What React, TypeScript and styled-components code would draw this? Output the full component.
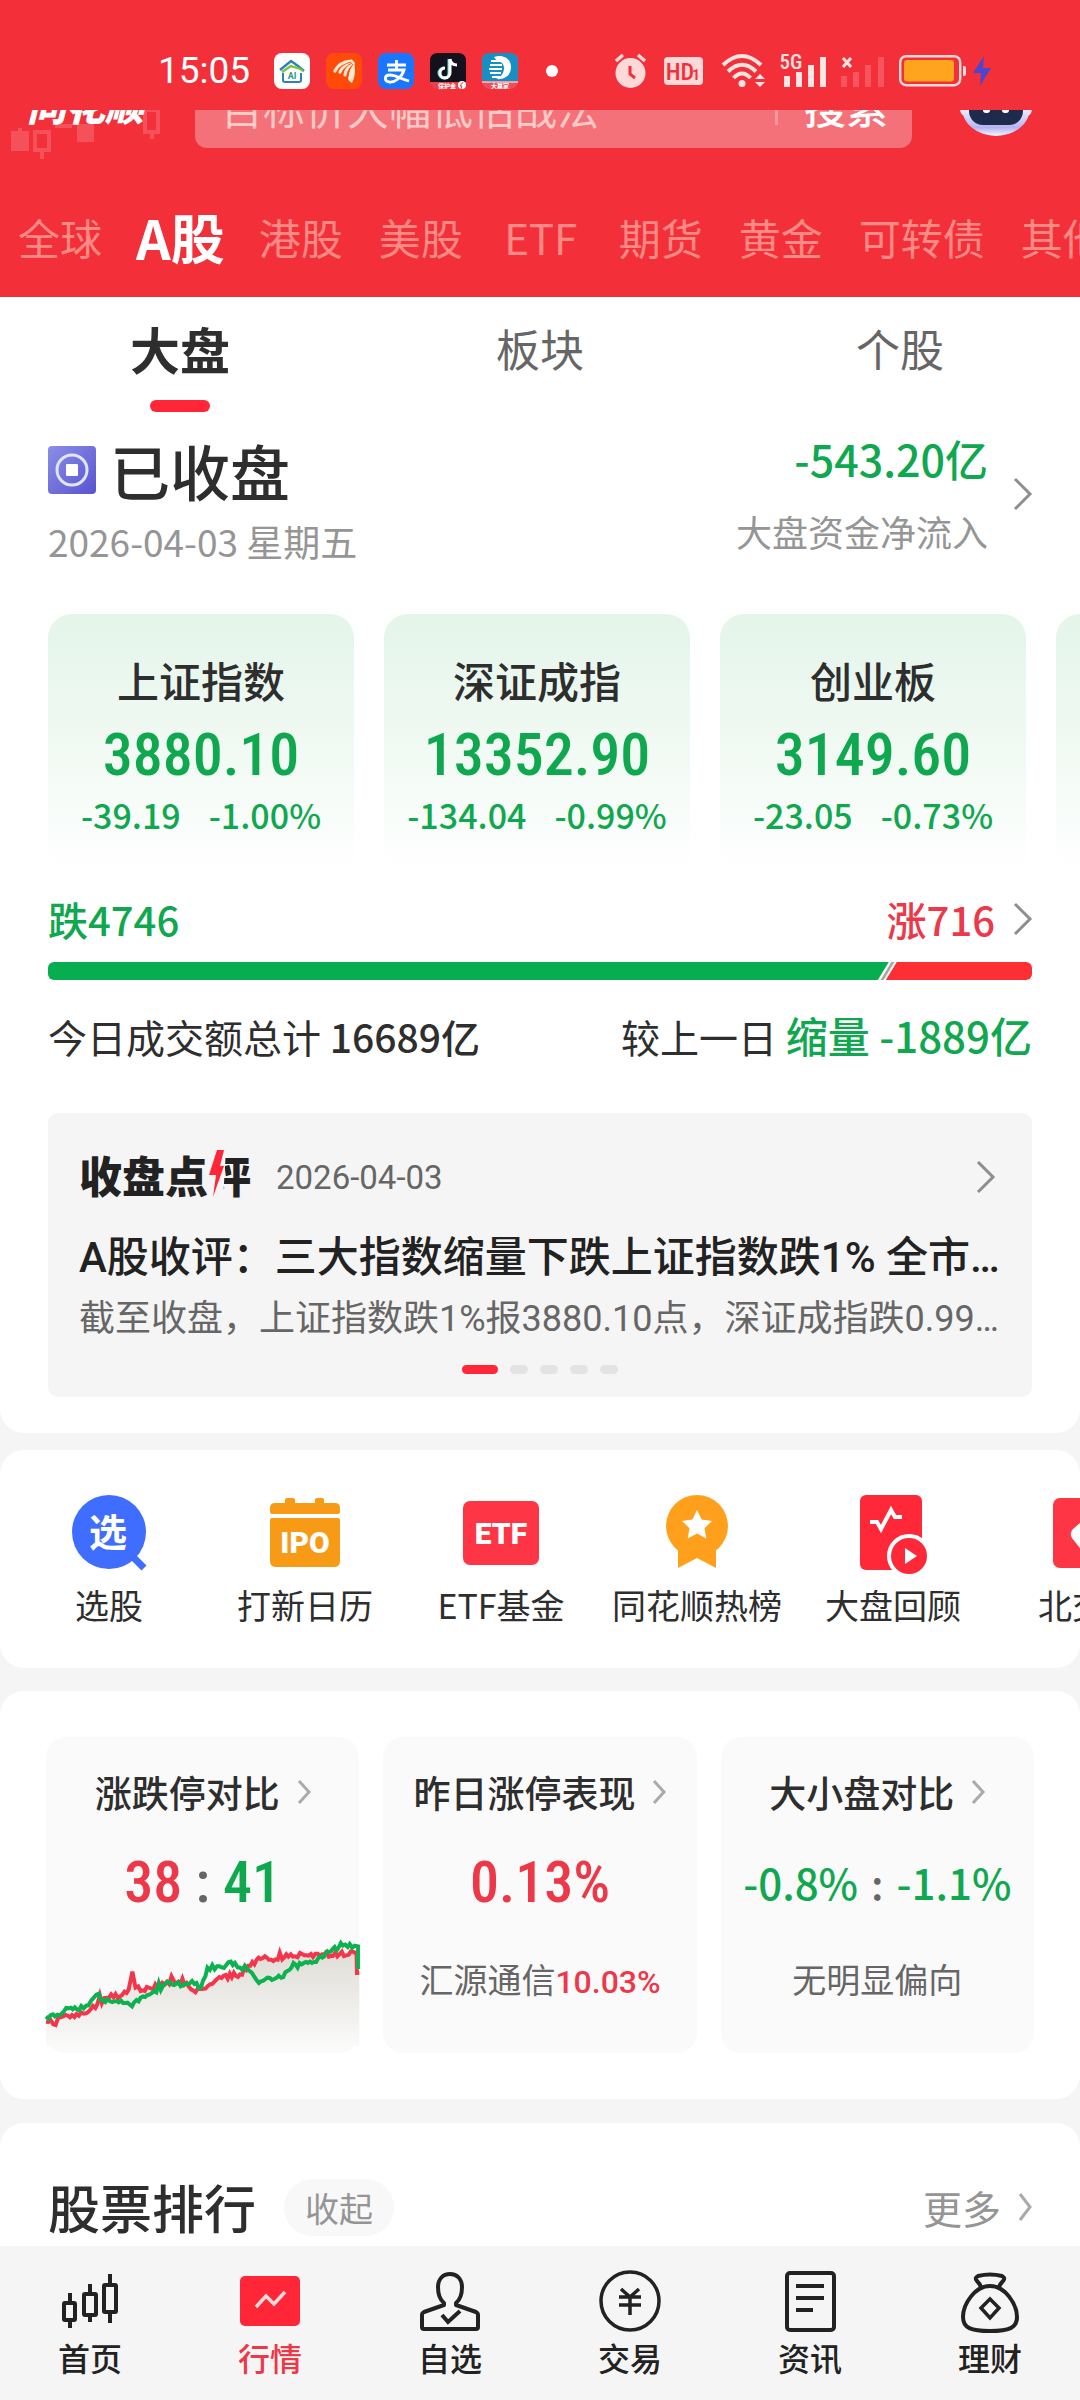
import React from "react";
import styled, { createGlobalStyle } from "styled-components";

const CJK = `"Noto Sans CJK SC", sans-serif`;
const MIXED = `Roboto, "Noto Sans CJK SC", sans-serif`;
const DIGITS = `"Roboto Condensed", "Noto Sans CJK SC", sans-serif`;

const c = {
  brand: "#f3303a",
  red: "#ff2637",
  redText: "#ec3849",
  green: "#0fa84f",
  ink: "#2e2e2e",
  mid: "#666666",
  soft: "#959595",
  page: "#f5f5f5",
};

const Global = createGlobalStyle`
  * { box-sizing: border-box; }
  body { margin: 0; background: ${c.page}; color: ${c.ink}; font-family: ${CJK}; }
  button, input { font: inherit; color: inherit; }
  button { border: 0; padding: 0; background: none; cursor: pointer; }
  a { color: inherit; text-decoration: none; }
  svg { display: block; flex: none; overflow: visible; }
  h1, h2, h3, p { margin: 0; font-weight: inherit; }
`;

const Page = styled.div`
  display: flex;
  flex-direction: column;
  min-height: 100vh;
  overflow-x: clip;
`;

/* ---------- status bar ---------- */
const StatusBar = styled.div`
  display: flex;
  align-items: center;
  height: 110px;
  padding: 32px 88px 0 158px;
  background: ${c.brand};
  color: #fff;
`;
const Clock = styled.time`
  font-family: ${MIXED};
  font-size: 37px;
  line-height: 44px;
`;
const AppIcons = styled.div`
  display: flex;
  gap: 16px;
  margin-left: 24px;
`;
const MoreDot = styled.span`
  width: 12px;
  height: 12px;
  margin-left: 28px;
  border-radius: 50%;
  background: #fff;
`;
const SystemIcons = styled.div`
  display: flex;
  align-items: center;
  gap: 15px;
  margin-left: auto;
`;

/* ---------- header ---------- */
const Header = styled.header`
  overflow: hidden;
  background: ${c.brand};
  color: #fff;
`;
const SearchRow = styled.div`
  position: relative;
  display: flex;
  align-items: center;
  height: 78px;
  margin-top: -40px;
  padding: 0 48px 0 27px;
`;
const Candles = styled.svg`
  position: absolute;
  left: 0;
  top: 40px;
`;
const Brand = styled.strong`
  width: 168px;
  padding-bottom: 10px;
  font-size: 39px;
  font-weight: 900;
  font-style: italic;
  line-height: 44px;
`;
const SearchBox = styled.form`
  display: flex;
  flex: 1;
  align-items: center;
  min-width: 0;
  height: 78px;
  padding: 0 24px 6px 26px;
  border-radius: 12px;
  background: #f47179;
  font-size: 42px;
`;
const SearchInput = styled.input`
  flex: 1;
  min-width: 0;
  padding: 0;
  border: 0;
  outline: 0;
  background: none;
  color: #fff;
  &::placeholder { color: #ffc9c6; opacity: 1; }
`;
const SearchButton = styled.button`
  padding-left: 26px;
  border-left: 3px solid #ff9a9c;
  line-height: 38px;
  font-weight: 500;
`;
const Robot = styled.button`
  margin-left: 48px;
`;
const MarketTabs = styled.nav`
  display: flex;
  align-items: center;
  gap: 36px;
  height: 149px;
  padding: 28px 0 0 18px;
  white-space: nowrap;
`;
const MarketTab = styled.button<{ $on?: boolean }>`
  flex: none;
  min-width: 84px;
  margin: ${p => (p.$on ? "0 -2px" : "0")};
  font-size: ${p => (p.$on ? 54 : 42)}px;
  font-weight: ${p => (p.$on ? 700 : 400)};
  line-height: 64px;
  color: ${p => (p.$on ? "#fff" : "#ff8a85")};
`;

/* ---------- shared ---------- */
const Section = styled.section<{ $gap?: number; $first?: boolean; $last?: boolean }>`
  margin-top: ${p => p.$gap || 0}px;
  border-radius: ${p => (p.$first ? "0 0 24px 24px" : p.$last ? "24px 24px 0 0" : "24px")};
  flex: ${p => (p.$last ? "1 0 auto" : "none")};
  background: #fff;
`;
const Row = styled.div<{ $top?: number; $align?: string }>`
  display: flex;
  align-items: ${p => p.$align || "center"};
  justify-content: space-between;
  margin-top: ${p => p.$top || 0}px;
  padding: 0 48px;
`;

/* ---------- market overview ---------- */
const SubTabs = styled.nav`
  display: flex;
`;
const SubTab = styled.button<{ $on?: boolean }>`
  display: flex;
  flex: 1;
  flex-direction: column;
  align-items: center;
  height: 115px;
  padding-top: 18px;
  font-size: ${p => (p.$on ? 50 : 44)}px;
  font-weight: ${p => (p.$on ? 700 : 400)};
  line-height: 66px;
  color: ${p => (p.$on ? c.ink : c.mid)};
  &::after {
    content: "";
    width: 60px;
    height: 12px;
    margin-top: 19px;
    border-radius: 6px;
    background: ${p => (p.$on ? c.red : "transparent")};
  }
`;
const MarketState = styled.h1`
  display: flex;
  align-items: center;
  gap: 14px;
  font-size: 60px;
  font-weight: 500;
  line-height: 74px;
`;
const Today = styled.p`
  margin-top: 10px;
  color: ${c.soft};
  font-size: 37px;
  line-height: 48px;
`;
const Flow = styled.a`
  display: flex;
  align-items: center;
  gap: 26px;
  text-align: right;
`;
const FlowValue = styled.p`
  color: ${c.green};
  font-size: 43px;
  font-weight: 500;
  line-height: 50px;
`;
const FlowLabel = styled.p`
  margin-top: 24px;
  color: ${c.soft};
  font-size: 36px;
  line-height: 48px;
`;
const IndexStrip = styled.div`
  display: flex;
  gap: 30px;
  margin-top: 49px;
  padding-left: 48px;
  overflow: hidden;
`;
const IndexCard = styled.a`
  flex: none;
  width: 306px;
  height: 264px;
  padding-top: 41px;
  border-radius: 24px;
  background: linear-gradient(#e4f5ea, #eff9f2 45%, #fff 98%);
  color: ${c.green};
  text-align: center;
`;
const IndexName = styled.h3`
  color: ${c.ink};
  font-size: 42px;
  font-weight: 500;
  line-height: 50px;
`;
const IndexPrice = styled.p`
  margin-top: 18px;
  font-family: ${DIGITS};
  font-size: 60px;
  font-weight: 500;
  line-height: 64px;
`;
const IndexChange = styled.p`
  display: flex;
  justify-content: center;
  gap: 28px;
  margin-top: 8px;
  font-size: 34px;
  font-weight: 500;
  line-height: 40px;
`;
const Count = styled.span<{ $color: string }>`
  display: flex;
  align-items: center;
  gap: 19px;
  color: ${p => p.$color};
  font-size: 40px;
  font-weight: 500;
  line-height: 50px;
`;
const Ratio = styled.div`
  display: flex;
  height: 18px;
  margin: 18px 48px 0;
  border-radius: 6px;
  overflow: hidden;
`;
const Falling = styled.span`
  flex: 834;
  background: #06ae4f;
  clip-path: polygon(0 0, 100% 0, calc(100% - 11px) 100%, 0 100%);
`;
const Slash = styled.span`
  width: 3px;
  height: 18px;
  margin: 0 -3px;
  background: #a5a5a5;
  transform: skewX(-31deg);
`;
const Rising = styled.span`
  flex: 145;
  background: #fe2f34;
  clip-path: polygon(11px 0, 100% 0, 100% 100%, 0 100%);
`;
const Turnover = styled.p`
  font-size: 39px;
  line-height: 50px;
  white-space: pre;
`;
const Strong = styled.span<{ $green?: boolean }>`
  color: ${p => (p.$green ? c.green : c.ink)};
  font-size: ${p => (p.$green ? 42 : 39)}px;
  font-weight: 500;
`;

/* ---------- closing review ---------- */
const Review = styled.a`
  display: block;
  margin: 52px 48px 0;
  padding: 39px 31px 23px;
  border-radius: 10px;
  background: ${c.page};
  font-family: ${MIXED};
`;
const ReviewHead = styled.div`
  display: flex;
  align-items: center;
  padding-right: 6px;
  height: 50px;
`;
const ReviewLogo = styled.strong`
  position: relative;
  display: flex;
  color: #222;
  font-family: ${CJK};
  font-size: 43px;
  font-weight: 900;
  line-height: 50px;
  padding-bottom: 6px;
`;
const ClippedGlyph = styled.span`
  clip-path: polygon(42% 0, 130% 0, 130% 100%, 35% 100%);
`;
const LogoBolt = styled.svg`
  position: absolute;
  left: 130px;
  top: 1px;
`;
const ReviewDate = styled.time`
  flex: 1;
  margin-left: 25px;
  color: ${c.mid};
  font-size: 33px;
`;
const ReviewTitle = styled.h2`
  margin-top: 30px;
  overflow: hidden;
  color: #222;
  font-size: 42px;
  font-weight: 500;
  line-height: 52px;
  white-space: nowrap;
`;
const ReviewText = styled.p`
  margin-top: 12px;
  overflow: hidden;
  color: ${c.mid};
  font-size: 36px;
  line-height: 46px;
  white-space: nowrap;
`;
const Dots = styled.div`
  display: flex;
  justify-content: center;
  gap: 12px;
  margin-top: 23px;
`;
const Dot = styled.span<{ $on?: boolean }>`
  width: ${p => (p.$on ? 36 : 18)}px;
  height: 9px;
  border-radius: 5px;
  background: ${p => (p.$on ? c.red : "#e3e3e3")};
`;

/* ---------- shortcuts ---------- */
const Shortcuts = styled.nav`
  display: flex;
  padding: 45px 0 41px 11px;
  overflow: hidden;
`;
const Shortcut = styled.a`
  display: flex;
  flex: none;
  flex-direction: column;
  align-items: center;
  gap: 12px;
  width: 196px;
  font-size: 34px;
  line-height: 44px;
  white-space: nowrap;
`;

/* ---------- stat cards ---------- */
const Stats = styled.div`
  display: grid;
  grid-template-columns: repeat(3, 1fr);
  gap: 24px;
  padding: 46px;
`;
const StatCard = styled.a`
  display: flex;
  flex-direction: column;
  align-items: center;
  height: 316px;
  padding-top: 31px;
  border-radius: 20px;
  background: #fafafa;
`;
const StatTitle = styled.h3`
  display: flex;
  align-items: center;
  gap: 18px;
  font-size: 37px;
  font-weight: 500;
  line-height: 48px;
  white-space: nowrap;
`;
const StatValue = styled.p<{ $small?: boolean }>`
  display: flex;
  justify-content: center;
  align-items: center;
  gap: 13px;
  margin-top: 34px;
  font-family: ${p => (p.$small ? CJK : DIGITS)};
  font-size: ${p => (p.$small ? 42 : 58)}px;
  font-weight: 500;
  line-height: 64px;
`;
const Tone = styled.span<{ $color: string }>`
  color: ${p => p.$color};
`;
const StatNote = styled.p`
  margin-top: 43px;
  color: ${c.mid};
  font-size: 34px;
  line-height: 44px;
`;
const Percent = styled.span`
  color: ${c.redText};
  font-family: ${MIXED};
  font-size: 32px;
  font-weight: 500;
`;
const Trend = styled.svg`
  width: 100%;
  height: 120px;
  margin-top: 19px;
`;

/* ---------- ranking ---------- */
const RankTitle = styled.h2`
  font-size: 52px;
  font-weight: 500;
  line-height: 68px;
`;
const RankLeft = styled.div`
  display: flex;
  align-items: center;
  gap: 28px;
`;
const Pill = styled.button`
  height: 57px;
  padding: 0 21px;
  border-radius: 29px;
  background: #f8f8f8;
  color: ${c.soft};
  font-size: 34px;
`;
const More = styled.a`
  display: flex;
  align-items: center;
  gap: 18px;
  color: ${c.soft};
  font-size: 39px;
`;

/* ---------- bottom bar ---------- */
const BottomBar = styled.nav`
  position: sticky;
  bottom: 0;
  display: flex;
  height: 154px;
  padding-top: 24px;
  background: ${c.page};
`;
const BottomTab = styled.a<{ $on?: boolean }>`
  display: flex;
  flex: 1;
  flex-direction: column;
  align-items: center;
  gap: 5px;
  color: ${p => (p.$on ? c.redText : "#222")};
  font-size: 32px;
  font-weight: 500;
  line-height: 40px;
`;

const Chevron = ({ w = 18, h = 32, color = "#8e8e8e" }) => (
  <svg width={w} height={h} viewBox={`0 0 ${w} ${h}`} fill="none" stroke={color} strokeWidth="3">
    <path d={`M1 1L${w - 2} ${h / 2}L1 ${h - 1}`} />
  </svg>
);

const svgText = { fontFamily: MIXED, textAnchor: "middle" as const };

const AppTiles = () => (
  <AppIcons>
    <svg width="36" height="36" viewBox="0 0 36 36">
      <rect width="36" height="36" rx="8" fill="#fff" />
      <path d="M6 17L17 8l7 5 6 5" fill="none" stroke="#2f7fb8" strokeWidth="2.4" />
      <path d="M8 19l9-6c4 2 8 1 12 5" fill="none" stroke="#7cc142" strokeWidth="2.4" />
      <path d="M9 20v7q0 2 2 2h14q2 0 2-2v-7" fill="none" stroke="#2f7fb8" strokeWidth="2" />
      <text x="18" y="26" fontSize="9" fontWeight="700" fill="#2f9a8a" {...svgText}>AI</text>
    </svg>
    <svg width="36" height="36" viewBox="0 0 36 36">
      <rect width="36" height="36" rx="8" fill="#ff4a08" />
      <g fill="none" stroke="#ffe9cf" strokeLinecap="round">
        <path d="M9 18Q13 9 25 8" strokeWidth="3.200" />
        <path d="M14 19Q17 12 26 9" strokeWidth="3.200" />
        <path d="M19 22Q20 14 27 10" strokeWidth="3.200" />
      </g>
      <path d="M22 25c1-7 3-12 6-16 2 7 1 15-2 21-2-1-4-3-4-5z" fill="#ffe9cf" />
      <g fill="none" stroke="#ff4a08" strokeWidth="0.900">
        <path d="M11 19.500Q15 11.500 25 9" />
        <path d="M16.500 21Q18.500 13.500 26 10" />
        <path d="M21.500 25Q22.500 16 27 11" />
      </g>
    </svg>
    <svg width="36" height="36" viewBox="0 0 36 36">
      <rect width="36" height="36" rx="8" fill="#1b76ff" />
      <g fill="none" stroke="#fff" strokeWidth="2.800">
        <path d="M9 12h19M18.500 7v10M10 17h16c-2 7-9 13-15 12-5-1-5-7 1-7 6 0 10 4 19 6" />
      </g>
    </svg>
    <svg width="36" height="36" viewBox="0 0 36 36">
      <path d="M8 0h20q8 0 8 8v21H0V8Q0 0 8 0z" fill="#15111c" />
      <path d="M19 6v14a5 5 0 1 1-5-5" fill="none" stroke="#4fe0dc" strokeWidth="3" />
      <path d="M20 6v14a5 5 0 1 1-5-5M20 6q1 6 7 6" fill="none" stroke="#fff" strokeWidth="3" />
      <path d="M0 29h36q-2 7-8 7H8q-6 0-8-7z" fill="#e8404c" />
      <text x="17" y="35" fontSize="6" fontWeight="700" fill="#fff" {...svgText}>保护金</text>
      <circle cx="32" cy="32" r="4" fill="#fff" />
      <path d="M33 29l-3 4h2l-1 3" stroke="#e8404c" fill="none" />
    </svg>
    <svg width="36" height="36" viewBox="0 0 36 36">
      <path d="M8 0h20q8 0 8 8v20H0V8Q0 0 8 0z" fill="#188fc4" />
      <path d="M12 4C20 1 29 5 29 14c0 8-6 13-15 12 5-2 8-6 8-11 0-4-3-7-7-7z" fill="#fff" />
      <path d="M9 8h10M8 12h12M7 16h13M8 20h11M10 24h8" stroke="#fff" strokeWidth="1.800" />
      <path d="M0 29h36q-2 7-8 7H8q-6 0-8-7z" fill="#e8505a" />
      <path d="M0 29h36" stroke="#fff" />
      <text x="18" y="35" fontSize="6" fontWeight="700" fill="#fff" {...svgText}>大赢家</text>
    </svg>
  </AppIcons>
);

const System = () => (
  <SystemIcons>
    <svg width="34" height="36" viewBox="0 0 34 36">
      <circle cx="15.500" cy="20" r="15" fill="#ffd9d8" />
      <path d="M1 8l7-6M23 2l7 6" stroke="#ffd9d8" strokeWidth="3.500" />
      <path d="M15 13v8l5 4" stroke={c.brand} strokeWidth="3" fill="none" />
    </svg>
    <svg width="42" height="30" viewBox="0 0 42 30">
      <rect x="0" y="1" width="39" height="28" rx="4" fill="#ffd9d8" />
      <text x="16" y="24" fontSize="24" fontWeight="500" fill={c.brand} {...svgText} fontFamily={DIGITS}>HD</text>
      <text x="32" y="24" fontSize="14" fontWeight="700" fill={c.brand} {...svgText}>1</text>
    </svg>
    <svg width="44" height="34" viewBox="0 0 44 34">
      <g fill="none" stroke="#ffe4e2" strokeWidth="4">
        <path d="M2 11Q21-7 40 11" />
        <path d="M7 17.500Q21 4 35 17.500" />
        <path d="M12.500 24Q21 15 29.500 24" />
      </g>
      <circle cx="21" cy="29.500" r="3.500" fill="#ffe4e2" />
      <path d="M34 25l5-5 5 5zM34 28l5 5 5-5z" fill="#ffe4e2" />
    </svg>
    <svg width="46" height="34" viewBox="0 0 46 34">
      <text x="11" y="15" fontSize="21" fontWeight="500" fill="#ffe4e2" {...svgText} fontFamily={DIGITS}>5G</text>
      <path d="M4 22h6v11H4zM16 18h6v15h-6zM28 11h6v22h-6zM40 3h6v30h-6z" fill="#ffe4e2" />
    </svg>
    <svg width="43" height="34" viewBox="0 0 43 34">
      <path d="M2 4l8 9M10 4l-8 9" stroke="#ffe4e2" strokeWidth="3" />
      <path d="M0 22h6v11H0zM12 18h6v15h-6zM24 11h6v22h-6zM37 3h6v30h-6z" fill="#f7555d" />
    </svg>
    <svg width="93" height="32" viewBox="0 0 93 32">
      <rect x="1.200" y="1.200" width="60" height="29" rx="6" fill="none" stroke="#ffd9d8" strokeWidth="2.400" />
      <rect x="5" y="5" width="50" height="21.500" rx="3" fill="#ffa51d" />
      <path d="M64 11h1q2 0 2 2v6q0 2-2 2h-1z" fill="#ffd9d8" />
      <path d="M85 1L74 18h8l-1 13 11-18h-8z" fill="#4c46cf" />
    </svg>
  </SystemIcons>
);

/* ---------- shortcut icons, 76 x 76 ---------- */
const shortcutIcons = [
  <svg key="pick" width="76" height="76" viewBox="0 0 76 76">
    <circle cx="38" cy="37" r="37" fill="#3f6dff" />
    <path d="M60 60l13 13" stroke="#3f6dff" strokeWidth="7" />
    <text x="37" y="51" fontSize="38" fontWeight="700" fill="#fff" textAnchor="middle" fontFamily={CJK}>选</text>
  </svg>,
  <svg key="ipo" width="76" height="76" viewBox="0 0 76 76">
    <path d="M18 8V5q0-2 2-2h6q2 0 2 2v3h20V5q0-2 2-2h5q2 0 2 2v3h11q5 0 5 5v4q0 2-2 2H5q-2 0-2-2v-4q0-5 5-5z" fill="#f79b16" />
    <path d="M5 23h66q2 0 2 2v41q0 6-6 6H9q-6 0-6-6V25q0-2 2-2z" fill="#f79b16" />
    <text x="38" y="58" fontSize="30" fontWeight="900" fill="#fff" {...svgText}>IPO</text>
  </svg>,
  <svg key="etf" width="76" height="76" viewBox="0 0 76 76">
    <rect y="6" width="76" height="64" rx="7" fill="#fd3545" />
    <text x="38" y="49" fontSize="30" fontWeight="900" fill="#fff" {...svgText}>ETF</text>
  </svg>,
  <svg key="hot" width="76" height="76" viewBox="0 0 76 76">
    <path d="M19 44h38v29l-19-10-19 10z" fill="#ffa01c" />
    <circle cx="38" cy="31" r="31" fill="#ffa01c" />
    <path d="M38 15l4.600 9.400 10.400 1.500-7.500 7.300 1.800 10.300L38 38.600l-9.300 4.900 1.800-10.300-7.500-7.300 10.400-1.500z" fill="#fff" />
  </svg>,
  <svg key="recap" width="76" height="76" viewBox="0 0 76 76">
    <rect x="5" width="62" height="75" rx="6" fill="#fe2839" />
    <path d="M15 27h7l4 7 10-19 4 7h7" fill="none" stroke="#fff" strokeWidth="4" />
    <circle cx="54" cy="61" r="20" fill="#fe2839" stroke="#fff" strokeWidth="4" />
    <path d="M50 53l12 8-12 8z" fill="#fff" />
  </svg>,
  <svg key="bse" width="76" height="76" viewBox="0 0 76 76">
    <rect x="2" y="3" width="72" height="70" rx="7" fill="#fe3545" />
    <path d="M38 20L22 34q-4 4-1 9l15 19h6V48l-12-9 8-6z" fill="#fff" />
  </svg>,
];

/* ---------- bottom icons, 64 x 62 ---------- */
const Line = ({ children }: { children: React.ReactNode }) => (
  <svg width="64" height="62" viewBox="0 0 64 62" fill="none" stroke="#222" strokeWidth="4">{children}</svg>
);
const bottomTabs = [
  { label: "首页", icon: (
    <Line>
      <rect x="6" y="33" width="11" height="17" rx="1" />
      <rect x="26" y="24" width="12" height="21" rx="1" />
      <rect x="46" y="15" width="12" height="27" rx="1" />
      <path d="M12 23v10M12 50v8M32 14v10M32 45v7M52 4v11M52 42v11" />
    </Line>) },
  { label: "行情", on: true, icon: (
    <svg width="64" height="62" viewBox="0 0 64 62">
      <rect x="2" y="6" width="60" height="50" rx="5" fill={c.red} />
      <path d="M18 37l10-11 8 8 11-12" fill="none" stroke="#ffdcda" strokeWidth="3.500" />
    </svg>) },
  { label: "自选", icon: (
    <Line>
      <path d="M26 33C21 29 20 22 20 17c0-8 5-13 12-13s12 5 12 13c0 5-1 12-6 16v2l20 7q2 1 2 3v12q0 2-2 2H6q-2 0-2-2V45q0-2 2-3l20-7z" strokeLinejoin="round" />
      <path d="M24 45l6 7 12-11" />
    </Line>) },
  { label: "交易", icon: (
    <Line>
      <circle cx="32" cy="31" r="29" strokeWidth="3.500" />
      <path d="M23 19l9 8 9-8M21 27h22M21 35h22M32 27v18" strokeWidth="3.500" />
    </Line>) },
  { label: "资讯", icon: (
    <Line>
      <rect x="9" y="3" width="47" height="57" rx="3" />
      <path d="M18 16h28M18 28h28M18 40h17" />
    </Line>) },
  { label: "理财", icon: (
    <Line>
      <path d="M23 17q-1-3-4-6-3-3 1-5 12-3 24 0 4 2 1 5-3 3-4 6" />
      <path d="M32 16C17 16 5 34 5 47c0 11 8 14 27 14s27-3 27-14C59 34 47 16 32 16z" />
      <path d="M32 29l9 9-9 10-9-10z" strokeWidth="3.500" />
    </Line>) },
];

/* ---------- trend chart ---------- */
type Pt = [number, number];
const upCurve: Pt[] = [[0, 266], [21, 274], [50, 250], [96, 248], [131, 228], [176, 194], [190, 184], [216, 190], [241, 170], [252, 116], [261, 164], [276, 174], [306, 166], [346, 154], [386, 146], [416, 160], [436, 178], [466, 166], [506, 132], [566, 124], [596, 98], [626, 78], [644, 74], [676, 80], [701, 64], [726, 70], [741, 60], [766, 68], [806, 64], [856, 64], [896, 56], [906, 62], [907, 120], [914, 120]];
const downCurve: Pt[] = [[0, 250], [46, 242], [66, 226], [96, 232], [131, 204], [141, 192], [166, 200], [206, 204], [251, 220], [276, 194], [316, 174], [366, 154], [406, 152], [426, 144], [452, 164], [471, 104], [506, 100], [526, 96], [551, 90], [566, 104], [601, 120], [621, 150], [646, 134], [686, 134], [716, 104], [746, 94], [776, 90], [806, 74], [836, 48], [866, 38], [900, 38], [910, 40], [910, 108]];
const jitter = (points: Pt[], seed: number) => {
  let s = seed;
  const rnd = () => { s = (s * 16807) % 2147483647; return s / 2147483647 - 0.5; };
  const out: string[] = [];
  points.forEach(([x, y], i) => {
    out.push(`${x},${y}`);
    const next = points[i + 1];
    if (!next || next[0] > 900) return;
    const n = Math.floor((next[0] - x) / 6);
    for (let k = 1; k < n; k++) {
      const t = k / n;
      const spike = rnd() > 0.42 ? -14 : 0;
      out.push(`${(x + (next[0] - x) * t).toFixed(0)},${(y + (next[1] - y) * t + rnd() * 16 + spike).toFixed(0)}`);
    }
  });
  return out.join(" ");
};
const upPoints = jitter(upCurve, 41);
const downPoints = jitter(downCurve, 38);

const indexes = [
  { name: "上证指数", price: "3880.10", diff: "-39.19", pct: "-1.00%" },
  { name: "深证成指", price: "13352.90", diff: "-134.04", pct: "-0.99%" },
  { name: "创业板", price: "3149.60", diff: "-23.05", pct: "-0.73%" },
];
const markets = ["全球", "A股", "港股", "美股", "ETF", "期货", "黄金", "可转债", "其他"];
const shortcuts = ["选股", "打新日历", "ETF基金", "同花顺热榜", "大盘回顾", "北交所"];

export default function App() {
  return (
    <Page lang="zh-CN">
      <Global />
      <StatusBar>
        <Clock>15:05</Clock>
        <AppTiles />
        <MoreDot />
        <System />
      </StatusBar>

      <Header>
        <SearchRow>
          <Candles width="170" height="52" viewBox="0 0 170 52" fill="#fff" opacity="0.16">
            <path d="M11 21h7v-3h4v3h7v20H11zM77 14h17v18H77zM55 14h17v4H55z" />
            <path d="M35 22h14v18H35zM42 40v9M145 0h13v22h-13zM152 22v7" fill="none" stroke="#fff" strokeWidth="4" />
          </Candles>
          <Brand>同花顺</Brand>
          <SearchBox onSubmit={e => e.preventDefault()}>
            <SearchInput aria-label="搜索" placeholder="目标价大幅低估战法" />
            <SearchButton type="submit">搜索</SearchButton>
          </SearchBox>
          <Robot aria-label="智能助手">
            <svg width="72" height="56" viewBox="0 0 72 56">
              <defs>
                <linearGradient id="shell" x1="0" y1="0" x2="0" y2="1">
                  <stop offset="0.5" stopColor="#f4f1ff" />
                  <stop offset="0.85" stopColor="#b5b4f0" />
                  <stop offset="1" stopColor="#f6f4ff" />
                </linearGradient>
              </defs>
              <rect x="0" y="16" width="72" height="20" rx="8" fill="#efe6fb" />
              <ellipse cx="36" cy="27" rx="34" ry="28" fill="url(#shell)" />
              <rect x="9" y="6" width="54" height="38" rx="14" fill="#1f2b4d" />
              <rect x="23" y="20" width="7" height="12" rx="3" fill="#fff" />
              <rect x="42" y="20" width="7" height="12" rx="3" fill="#fff" />
            </svg>
          </Robot>
        </SearchRow>
        <MarketTabs>
          {markets.map(m => <MarketTab key={m} $on={m === "A股"}>{m}</MarketTab>)}
        </MarketTabs>
      </Header>

      <Section $first>
        <SubTabs>
          <SubTab $on>大盘</SubTab>
          <SubTab>板块</SubTab>
          <SubTab>个股</SubTab>
        </SubTabs>
        <Row $top={21} $align="flex-start">
          <div>
            <MarketState>
              <svg width="48" height="48" viewBox="0 0 48 48">
                <defs>
                  <linearGradient id="badge" x1="0" y1="0" x2="1" y2="1">
                    <stop offset="0" stopColor="#8a8fe6" />
                    <stop offset="1" stopColor="#5a52d0" />
                  </linearGradient>
                </defs>
                <rect width="48" height="48" rx="4" fill="url(#badge)" />
                <circle cx="24" cy="24" r="15" fill="none" stroke="#dfe4ff" strokeWidth="3" />
                <rect x="18" y="18" width="12" height="12" rx="1" fill="#fff" />
              </svg>
              已收盘
            </MarketState>
            <Today>2026-04-03 星期五</Today>
          </div>
          <Flow href="#flow">
            <div>
              <FlowValue>-543.20亿</FlowValue>
              <FlowLabel>大盘资金净流入</FlowLabel>
            </div>
            <Chevron />
          </Flow>
        </Row>

        <IndexStrip>
          {indexes.map(i => (
            <IndexCard key={i.name} href="#index">
              <IndexName>{i.name}</IndexName>
              <IndexPrice>{i.price}</IndexPrice>
              <IndexChange><span>{i.diff}</span><span>{i.pct}</span></IndexChange>
            </IndexCard>
          ))}
          <IndexCard href="#index" aria-label="更多指数" />
        </IndexStrip>

        <Row $top={16}>
          <Count $color={c.green}>跌4746</Count>
          <Count $color={c.redText}>涨716<Chevron /></Count>
        </Row>
        <Ratio><Falling /><Slash /><Rising /></Ratio>
        <Row $top={30}>
          <Turnover>今日成交额总计 <Strong>16689亿</Strong></Turnover>
          <Turnover>较上一日 <Strong $green>缩量 -1889亿</Strong></Turnover>
        </Row>

        <Review href="#review">
          <ReviewHead>
            <ReviewLogo>
              收盘点<ClippedGlyph>评</ClippedGlyph>
              <LogoBolt width="16" height="48" viewBox="0 0 16 48">
                <path d="M8 0h7l-4 16h4L4 47l3-22H0z" fill={c.red} />
              </LogoBolt>
            </ReviewLogo>
            <ReviewDate>2026-04-03</ReviewDate>
            <Chevron />
          </ReviewHead>
          <ReviewTitle>A股收评：三大指数缩量下跌上证指数跌1% 全市…</ReviewTitle>
          <ReviewText>截至收盘，上证指数跌1%报3880.10点，深证成指跌0.99…</ReviewText>
          <Dots><Dot $on /><Dot /><Dot /><Dot /><Dot /></Dots>
        </Review>
        <Row $top={36} />
      </Section>

      <Section $gap={17}>
        <Shortcuts>
          {shortcuts.map((s, i) => (
            <Shortcut key={s} href="#shortcut">{shortcutIcons[i]}{s}</Shortcut>
          ))}
        </Shortcuts>
      </Section>

      <Section $gap={23}>
        <Stats>
          <StatCard href="#limit">
            <StatTitle>涨跌停对比<Chevron w={13} h={24} color="#aaa" /></StatTitle>
            <StatValue>
              <Tone $color={c.redText}>38</Tone><Tone $color={c.mid}>:</Tone><Tone $color={c.green}>41</Tone>
            </StatValue>
            <Trend viewBox="0 0 914 360" preserveAspectRatio="none">
              <defs>
                <linearGradient id="area" x1="0" y1="0" x2="0" y2="1">
                  <stop offset="0" stopColor="#dfddd6" />
                  <stop offset="1" stopColor="#fafafa" />
                </linearGradient>
              </defs>
              <polygon points={`${upPoints} 914,340 0,340`} fill="url(#area)" />
              <polyline points={upPoints} fill="none" stroke="#f4364c" strokeWidth="4" vectorEffect="non-scaling-stroke" />
              <polyline points={downPoints} fill="none" stroke="#0db14f" strokeWidth="4" vectorEffect="non-scaling-stroke" />
            </Trend>
          </StatCard>
          <StatCard href="#yesterday">
            <StatTitle>昨日涨停表现<Chevron w={13} h={24} color="#aaa" /></StatTitle>
            <StatValue><Tone $color={c.redText}>0.13%</Tone></StatValue>
            <StatNote>汇源通信<Percent>10.03%</Percent></StatNote>
          </StatCard>
          <StatCard href="#caps">
            <StatTitle>大小盘对比<Chevron w={13} h={24} color="#aaa" /></StatTitle>
            <StatValue $small>
              <Tone $color={c.green}>-0.8%</Tone><Tone $color={c.mid}>:</Tone><Tone $color={c.green}>-1.1%</Tone>
            </StatValue>
            <StatNote>无明显偏向</StatNote>
          </StatCard>
        </Stats>
      </Section>

      <Section $gap={24} $last>
        <Row $top={50}>
          <RankLeft>
            <RankTitle>股票排行</RankTitle>
            <Pill>收起</Pill>
          </RankLeft>
          <More href="#rank">更多<Chevron w={13} h={28} color="#aaa" /></More>
        </Row>
      </Section>

      <BottomBar>
        {bottomTabs.map(t => (
          <BottomTab key={t.label} href="#tab" $on={t.on}>{t.icon}{t.label}</BottomTab>
        ))}
      </BottomBar>
    </Page>
  );
}
